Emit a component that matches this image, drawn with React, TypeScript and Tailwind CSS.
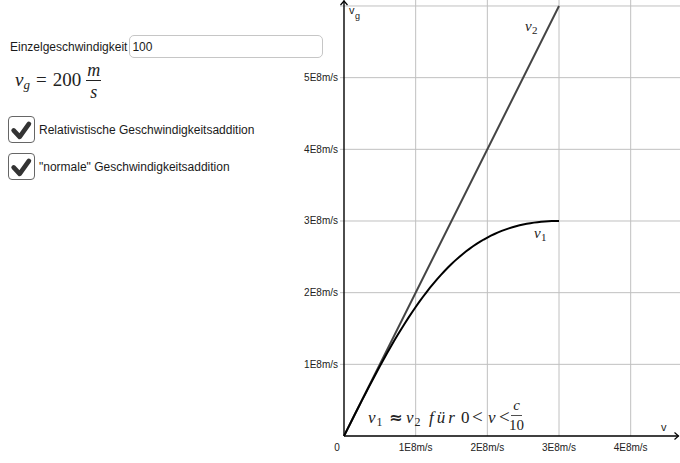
import React from "react";

const ORIGIN_X = 344;
const ORIGIN_Y = 436;
const U = 71.67;

function px(v: number) {
  return ORIGIN_X + v * U;
}
function py(v: number) {
  return ORIGIN_Y - v * U;
}

function relPath() {
  const pts: string[] = [];
  for (let i = 0; i <= 60; i++) {
    const v = (3 * i) / 60;
    const vg = (2 * v) / (1 + (v * v) / 9);
    pts.push(`${i === 0 ? "M" : "L"}${px(v).toFixed(2)},${py(vg).toFixed(2)}`);
  }
  return pts.join(" ");
}

function CheckRow({ label }: { label: string }) {
  return (
    <div className="flex items-center pl-[8px] h-[27px]">
      <div className="w-[27px] h-[27px] border-[1.5px] border-[#666] rounded-[4px] bg-white flex items-center justify-center shrink-0">
        <svg width="27" height="27" viewBox="0 0 27 27">
          <polyline
            points="5,14.5 11.5,21.5 21.5,7.5"
            fill="none"
            stroke="#333"
            strokeWidth="5"
            strokeLinecap="round"
            strokeLinejoin="round"
          />
        </svg>
      </div>
      <span className="ml-[4px]">{label}</span>
    </div>
  );
}

export default function App() {
  const sans = "'Liberation Sans', Arial, sans-serif";
  const serif = "'Liberation Serif', 'Times New Roman', serif";
  const yLabels = [1, 2, 3, 4, 5];
  const xLabels = [1, 2, 3, 4];
  return (
    <div className="flex w-[680px] h-[463px] bg-white overflow-hidden">
      <div className="relative z-10 w-[330px] shrink-0 flex flex-col pt-[35px] font-['Liberation_Sans',Arial,sans-serif] text-[12px] text-[#1a1a1a]">
        <div className="flex items-center pl-[10px] h-[23px]">
          <span>Einzelgeschwindigkeit</span>
          <div className="ml-[2px] w-[194px] h-[23px] border border-[#c6c6c6] rounded-[5px] flex items-center pl-[2px] bg-white">
            100
          </div>
        </div>
        <div className="h-[58px] flex items-center pl-[15px] pb-[14px] font-['Liberation_Serif','Times_New_Roman',serif] text-[19px] text-[#222]">
          <span className="italic">v</span>
          <span className="italic text-[13px] relative top-[5px]">g</span>
          <span className="ml-[6px] mr-[6px]">=</span>
          <span>200</span>
          <span className="inline-flex flex-col items-center ml-[5px] relative top-[1px]">
            <span className="italic text-[18px] leading-[16px] pb-[2px] px-[1px] border-b border-[#222]">m</span>
            <span className="italic text-[18px] leading-[16px] pt-[3px]">s</span>
          </span>
        </div>
        <CheckRow label="Relativistische Geschwindigkeitsaddition" />
        <div className="h-[10px]" />
        <CheckRow label={'"normale" Geschwindigkeitsaddition'} />
      </div>
      <svg
        width="350"
        height="463"
        viewBox="330 0 350 463"
        className="shrink-0 overflow-visible"
      >
        {/* grid */}
        {[1, 2, 3, 4].map((k) => (
          <line key={"vx" + k} x1={px(k)} y1={0} x2={px(k)} y2={ORIGIN_Y} stroke="#c0c0c0" strokeWidth="1" />
        ))}
        {[1, 2, 3, 4, 5, 6].map((k) => (
          <line key={"hy" + k} x1={ORIGIN_X - 4} y1={py(k)} x2={680} y2={py(k)} stroke="#c0c0c0" strokeWidth="1" />
        ))}
        {/* axes */}
        <line x1={ORIGIN_X} y1={0.5} x2={ORIGIN_X} y2={ORIGIN_Y} stroke="#000" strokeWidth="1.4" />
        <line x1={ORIGIN_X} y1={ORIGIN_Y} x2={678.5} y2={ORIGIN_Y} stroke="#000" strokeWidth="1.4" />
        <polyline points={`${ORIGIN_X - 3.5},5 ${ORIGIN_X},1 ${ORIGIN_X + 3.5},5`} fill="none" stroke="#000" strokeWidth="1.2" />
        <polyline points={`674.5,${ORIGIN_Y - 3.5} 678.5,${ORIGIN_Y} 674.5,${ORIGIN_Y + 3.5}`} fill="none" stroke="#000" strokeWidth="1.2" />
        {/* axis labels */}
        <text x={349} y={14} fontFamily={sans} fontSize="11" fill="#222">v</text>
        <text x={355} y={19} fontFamily={sans} fontSize="9" fill="#222">g</text>
        <text x={661} y={431} fontFamily={sans} fontSize="11" fill="#222">v</text>
        {yLabels.map((k) => (
          <text key={"yl" + k} x={338} y={py(k) + 3.5} textAnchor="end" fontFamily={sans} fontSize="10" fill="#222">
            {k}E8m/s
          </text>
        ))}
        {xLabels.map((k) => (
          <text key={"xl" + k} x={px(k)} y={450.5} textAnchor="middle" fontFamily={sans} fontSize="10" fill="#222">
            {k}E8m/s
          </text>
        ))}
        <text x={337} y={450.5} textAnchor="middle" fontFamily={sans} fontSize="10" fill="#222">0</text>
        {/* curves */}
        <line x1={ORIGIN_X} y1={ORIGIN_Y} x2={px(3)} y2={py(6)} stroke="#444" strokeWidth="2" />
        <path d={relPath()} fill="none" stroke="#000" strokeWidth="2" />
        {/* curve labels */}
        <text x={525} y={31} fontFamily={serif} fontSize="15" fontStyle="italic" fill="#222">v</text>
        <text x={532} y={34} fontFamily={serif} fontSize="11" fill="#222">2</text>
        <text x={534} y={238} fontFamily={serif} fontSize="15" fontStyle="italic" fill="#222">v</text>
        <text x={541} y={241} fontFamily={serif} fontSize="11" fill="#222">1</text>
        {/* formula */}
        <g fontFamily={serif} fill="#222">
          <text x={368} y={423} fontSize="17" fontStyle="italic">v</text>
          <text x={376.5} y={426} fontSize="12">1</text>
          <text x={389} y={423} fontSize="16" fontWeight="bold" fontFamily="'DejaVu Sans', sans-serif">≈</text>
          <text x={406} y={423} fontSize="17" fontStyle="italic">v</text>
          <text x={414.5} y={426} fontSize="12">2</text>
          <text x={429} y={423} fontSize="17" fontStyle="italic" letterSpacing="3">für</text>
          <text x={461} y={423} fontSize="17">0</text>
          <text x={472} y={423} fontSize="19">&lt;</text>
          <text x={488} y={423} fontSize="17" fontStyle="italic">v</text>
          <text x={499} y={423} fontSize="19">&lt;</text>
          <text x={516.5} y={410} fontSize="15" fontStyle="italic" textAnchor="middle">c</text>
          <line x1={511} y1={415.5} x2={522} y2={415.5} stroke="#222" strokeWidth="0.8" />
          <text x={516.5} y={430} fontSize="15" textAnchor="middle">10</text>
        </g>
      </svg>
    </div>
  );
}
